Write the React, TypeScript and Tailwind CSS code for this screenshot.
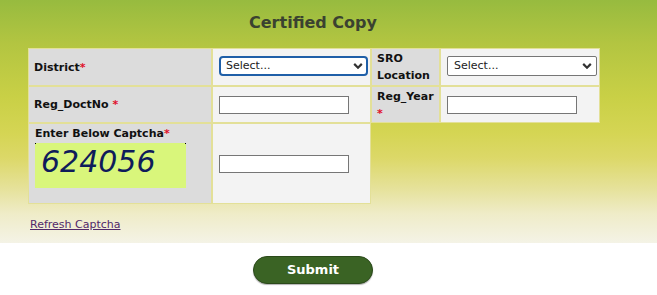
import React from "react";

function Chevron() {
  return (
    <svg
      className="pointer-events-none absolute right-[5px] top-1/2 -translate-y-1/2"
      width="10"
      height="7"
      viewBox="0 0 10 7"
    >
      <path d="M1.2 1.4 L5 5.2 L8.8 1.4" fill="none" stroke="#333" strokeWidth="2.2" />
    </svg>
  );
}

function Req() {
  return <span className="text-[#e0102a]">*</span>;
}

export default function App() {
  const label =
    "bg-[#dcdcdc] shadow-[0_0_0_1px_#e3e098] pl-[5px] pr-0 flex items-center text-[11px] leading-[17px] font-bold text-[#111]";
  const field = "bg-[#f3f3f3] shadow-[0_0_0_1px_#e3e098] pl-[6px] flex items-center";
  const input =
    "block w-[130px] h-[18px] border border-[#767676] bg-white outline-none";
  return (
    <div className="w-[657px] h-[295px] bg-white font-['DejaVu_Sans',Verdana,sans-serif]">
      <div className="h-[243px] pt-[13px] bg-[linear-gradient(to_bottom,#97bb3f_0%,#b3c541_18%,#c9d046_40%,#d5d554_55%,#dcd868_65%,#e6e29c_78%,#efecc8_88%,#f4f3e6_100%)]">
        <div className="w-[626px] text-center text-[16px] leading-[20px] font-bold text-[#3a4230]">
          Certified Copy
        </div>
        <div className="ml-[29px] mt-[16px] grid grid-cols-[182px_157px_67px_158px] grid-rows-[36px_35px_79px] gap-[2px]">
          <div className={label}>
            <span>
              District
              <Req />
            </span>
          </div>
          <div className={field}>
            <div className="relative flex -mt-[3px]">
              <select className="block appearance-none w-[149px] h-[20px] rounded-[4px] border-2 border-[#1f5fa8] bg-white pl-[5px] text-[11px] leading-[14px] text-[#222] outline-none">
                <option>Select...</option>
              </select>
              <Chevron />
            </div>
          </div>
          <div className={label}>
            <span>SRO Location</span>
          </div>
          <div className={field}>
            <div className="relative flex -mt-[3px]">
              <select className="block appearance-none w-[150px] h-[20px] rounded-[2px] border border-[#767676] bg-white pl-[6px] text-[11px] leading-[14px] text-[#222] outline-none">
                <option>Select...</option>
              </select>
              <Chevron />
            </div>
          </div>

          <div className={label}>
            <span>
              Reg_DoctNo <Req />
            </span>
          </div>
          <div className={field}>
            <input type="text" className={input} />
          </div>
          <div className={label}>
            <span>
              Reg_Year <Req />
            </span>
          </div>
          <div className={field}>
            <input type="text" className={input} />
          </div>

          <div className="bg-[#dcdcdc] shadow-[0_0_0_1px_#e3e098] pl-[6px] pt-[3px] flex flex-col">
            <div className="text-[11px] leading-[13px] font-bold text-[#111]">
              Enter Below Captcha
              <Req />
            </div>
            <div className="relative mt-[3px] w-[151px] h-[45px] bg-[#d9f67b] pl-[6px] pt-[4px]">
              <span className="absolute left-0 top-0 w-[1px] h-[1px] bg-black" />
              <span className="absolute right-0 top-0 w-[1px] h-[1px] bg-black" />
              <div className="text-[30px] leading-[30px] italic text-[#0f1c5a]">
                624056
              </div>
            </div>
          </div>
          <div className={field}>
            <input type="text" className={input} />
          </div>
        </div>
        <div className="ml-[30px] mt-[15px] text-[11px] leading-[14px]">
          <a href="#" className="underline text-[#51296a]">
            Refresh Captcha
          </a>
        </div>
      </div>
      <div className="w-[626px] flex justify-center pt-[13px]">
        <button className="w-[120px] h-[28px] rounded-full bg-[#3a6324] border border-[#2b4a1a] text-white font-bold text-[13px] shadow-[0_1px_1px_rgba(0,0,0,0.3)]">
          Submit
        </button>
      </div>
    </div>
  );
}
